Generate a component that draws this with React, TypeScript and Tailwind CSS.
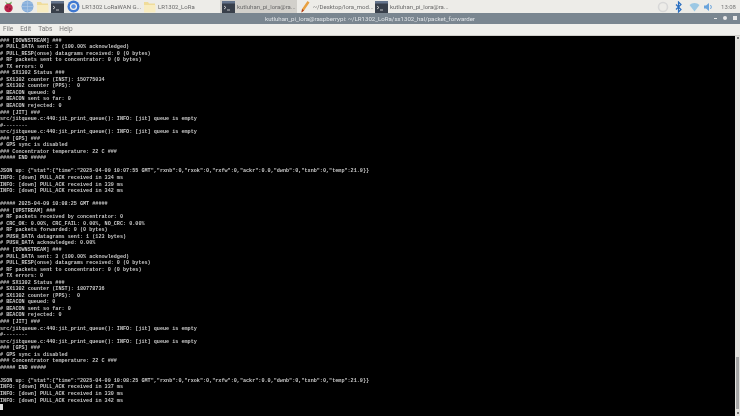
const sans = "font-['Roboto',sans-serif]"

const block1 = `### [DOWNSTREAM] ###
# PULL_DATA sent: 3 (100.00% acknowledged)
# PULL_RESP(onse) datagrams received: 0 (0 bytes)
# RF packets sent to concentrator: 0 (0 bytes)
# TX errors: 0
### SX1302 Status ###
# SX1302 counter (INST): 150775034
# SX1302 counter (PPS):  0
# BEACON queued: 0
# BEACON sent so far: 0
# BEACON rejected: 0
### [JIT] ###
src/jitqueue.c:440:jit_print_queue(): INFO: [jit] queue is empty
#--------
src/jitqueue.c:440:jit_print_queue(): INFO: [jit] queue is empty
### [GPS] ###
# GPS sync is disabled
### Concentrator temperature: 22 C ###
##### END #####

JSON up: {"stat":{"time":"2025-04-09 10:07:55 GMT","rxnb":0,"rxok":0,"rxfw":0,"ackr":0.0,"dwnb":0,"txnb":0,"temp":21.9}}
INFO: [down] PULL_ACK received in 334 ms
INFO: [down] PULL_ACK received in 339 ms
INFO: [down] PULL_ACK received in 342 ms

##### 2025-04-09 10:08:25 GMT #####
### [UPSTREAM] ###
# RF packets received by concentrator: 0
# CRC_OK: 0.00%, CRC_FAIL: 0.00%, NO_CRC: 0.00%
# RF packets forwarded: 0 (0 bytes)
# PUSH_DATA datagrams sent: 1 (123 bytes)
# PUSH_DATA acknowledged: 0.00%
### [DOWNSTREAM] ###
# PULL_DATA sent: 3 (100.00% acknowledged)
# PULL_RESP(onse) datagrams received: 0 (0 bytes)
# RF packets sent to concentrator: 0 (0 bytes)
# TX errors: 0
### SX1302 Status ###
# SX1302 counter (INST): 180778736
# SX1302 counter (PPS):  0
# BEACON queued: 0
# BEACON sent so far: 0
# BEACON rejected: 0
### [JIT] ###
src/jitqueue.c:440:jit_print_queue(): INFO: [jit] queue is empty
#--------
src/jitqueue.c:440:jit_print_queue(): INFO: [jit] queue is empty
### [GPS] ###
# GPS sync is disabled
### Concentrator temperature: 22 C ###
##### END #####

JSON up: {"stat":{"time":"2025-04-09 10:08:25 GMT","rxnb":0,"rxok":0,"rxfw":0,"ackr":0.0,"dwnb":0,"txnb":0,"temp":21.9}}
INFO: [down] PULL_ACK received in 337 ms
INFO: [down] PULL_ACK received in 330 ms
INFO: [down] PULL_ACK received in 342 ms`

function TermIcon() {
  return (
    <svg width="13" height="12" viewBox="0 0 13 12" className="shrink-0">
      <rect width="13" height="12" fill="#383f4a" />
      <rect width="13" height="2.500" fill="#64748c" />
      <path d="M2 5l2 1.500L2 8M5 9h3" stroke="#e5e5e5" strokeWidth="0.8" fill="none" />
    </svg>
  )
}

function FolderIcon() {
  return (
    <svg width="13" height="12" viewBox="0 0 13 12" className="shrink-0">
      <path d="M1 1h4l1 1.500h6V11H1z" fill="#f0dc9a" />
      <path d="M1 4h11.500V11.500H1z" fill="#f8ecc0" />
    </svg>
  )
}

function GlobeIcon() {
  return (
    <svg width="13" height="13" viewBox="0 0 13 13" className="shrink-0">
      <circle cx="6.500" cy="6.500" r="6" fill="#86aedb" />
      <path d="M.5 6.500h12M6.500.5v12M2 3h9M2 10h9" stroke="#b4cbe6" strokeWidth="0.6" />
    </svg>
  )
}

function ChromiumIcon() {
  return (
    <svg width="13" height="13" viewBox="0 0 13 13" className="shrink-0">
      <circle cx="6.500" cy="6.500" r="6" fill="#3f78d0" />
      <circle cx="6.500" cy="6.500" r="3.600" fill="#f2f2ee" />
      <circle cx="6.500" cy="6.500" r="2.300" fill="#5a90e0" />
    </svg>
  )
}

function RaspberryIcon() {
  return (
    <svg width="11" height="13" viewBox="0 0 11 13" className="shrink-0">
      <path d="M2 1.500l3 2 1-.2 3-1.800-1 3-4 .2z" fill="#6ba257" />
      <circle cx="5.500" cy="8" r="4.200" fill="#b8234a" />
      <circle cx="4" cy="7" r="0.9" fill="#8c1535" />
      <circle cx="7" cy="9" r="0.9" fill="#8c1535" />
    </svg>
  )
}

function PencilIcon() {
  return (
    <svg width="12" height="14" viewBox="0 0 12 14" className="shrink-0">
      <path d="M8.500 1l2 1.500L5 10.500 2.500 12.500 3 9z" fill="#e8a040" />
      <path d="M3 9l2 1.500-2.500 2z" fill="#b03a20" />
    </svg>
  )
}

function TaskItem({ icon, label, active, width }: { icon: React.ReactNode; label: string; active?: boolean; width: string }) {
  return (
    <div className={`flex items-center gap-[2px] h-full overflow-hidden ${width} ${active ? "bg-[#d2d0cb]" : ""}`}>
      {icon}
      <span className="text-[6px] text-[#6a6a6a] whitespace-nowrap">{label}</span>
    </div>
  )
}

export default function App() {
  return (
    <div className={`w-[740px] h-[416px] overflow-hidden flex flex-col bg-black ${sans}`}>
      {/* panel */}
      <div className="h-[13px] shrink-0 bg-[#edece8] flex items-center blur-[0.3px]">
        <div className="flex items-center h-full pl-[3px] w-[66px] gap-[2px]">
          <RaspberryIcon />
          <div className="w-[1px] ml-[2px]" />
          <GlobeIcon />
          <FolderIcon />
          <TermIcon />
        </div>
        <div className="flex h-full flex-1 items-center">
          <TaskItem width="w-[77px] pl-[1px]" icon={<ChromiumIcon />} label="LR1302 LoRaWAN G..." />
          <TaskItem width="w-[77px]" icon={<FolderIcon />} label="LR1302_LoRa" />
          <TaskItem width="w-[77px] pl-[2px]" active icon={<TermIcon />} label="kutluhan_pi_lora@ra..." />
          <TaskItem width="w-[77px] pl-[2px]" icon={<PencilIcon />} label="~/Desktop/lora_mod..." />
          <TaskItem width="w-[77px] pl-[1px]" icon={<TermIcon />} label="kutluhan_pi_lora@ra..." />
        </div>
        <div className="flex items-center pr-[4px]">
          <svg width="12" height="12" viewBox="0 0 12 12">
            <circle cx="6" cy="6" r="4.500" fill="none" stroke="#d8d8d8" strokeWidth="1.600" />
          </svg>
          <svg width="7" height="12" viewBox="0 0 7 12" className="ml-[5.500px]">
            <path d="M1 3.500l5 5-2.500 2.500V1L6 3.500l-5 5" fill="none" stroke="#2a6fc0" strokeWidth="1.200" />
          </svg>
          <svg width="11" height="10" viewBox="0 0 11 10" className="ml-[7px]">
            <path d="M.5 3a7 7 0 0 1 10 0L5.500 9.500z" fill="#9cc8e4" />
          </svg>
          <svg width="10" height="10" viewBox="0 0 10 10" className="ml-[4.500px]">
            <path d="M0 3.500h2L5 1v8L2 6.500H0z" fill="#6aa4dc" />
            <path d="M6.500 3a3 3 0 0 1 0 4" stroke="#6aa4dc" fill="none" />
          </svg>
          <span className="text-[6px] text-[#777] ml-[7px]">13:08</span>
        </div>
      </div>
      {/* title bar */}
      <div className="h-[11px] shrink-0 bg-[#7a8690] flex items-center justify-center relative blur-[0.3px]">
        <span className="text-[6.100px] text-[#dfe3e6] whitespace-nowrap">kutluhan_pi_lora@raspberrypi: ~/LR1302_LoRa/sx1302_hal/packet_forwarder</span>
        <div className="absolute right-[3px] top-[3px] flex gap-[6px] items-center">
          <div className="w-[3px] h-[1px] mt-[1px] bg-[#e8e8e8]" />
          <div className="w-[4px] h-[4px] bg-[#e8e8e8] rounded-full" />
          <div className="w-[4px] h-[4px] bg-[#e8e8e8]" />
        </div>
      </div>
      {/* menu */}
      <div className="h-[12px] shrink-0 bg-[#f0efeb] flex items-center gap-[7px] pl-[3px] border-b border-[#d0cfca] blur-[0.3px]">
        {["File", "Edit", "Tabs", "Help"].map((m) => (
          <span key={m} className="text-[6.500px] text-[#777]">{m}</span>
        ))}
      </div>
      {/* terminal */}
      <div className="flex-1 flex min-h-0">
        <div className="flex-1 bg-black overflow-hidden pt-[1.500px] blur-[0.35px]">
          <pre className="font-['Liberation_Mono',monospace] font-bold text-[5.130px] leading-[6.540px] text-[#c8c8c8] whitespace-pre">{block1}</pre>
          <div className="w-[3px] h-[6px] bg-[#dcdcdc]" />
        </div>
        <div className="w-[5px] bg-[#e4e3df] flex flex-col items-center py-[1px]">
          <div className="w-[2px] h-[2px] bg-[#777]" />
          <div className="flex-1 w-full flex flex-col justify-end">
            <div className="h-[52px] mx-[1px] bg-[#a8a8a8]" />
          </div>
          <div className="w-[2px] h-[2px] bg-[#777] mt-[3px] mb-[1px]" />
        </div>
      </div>
    </div>
  )
}
